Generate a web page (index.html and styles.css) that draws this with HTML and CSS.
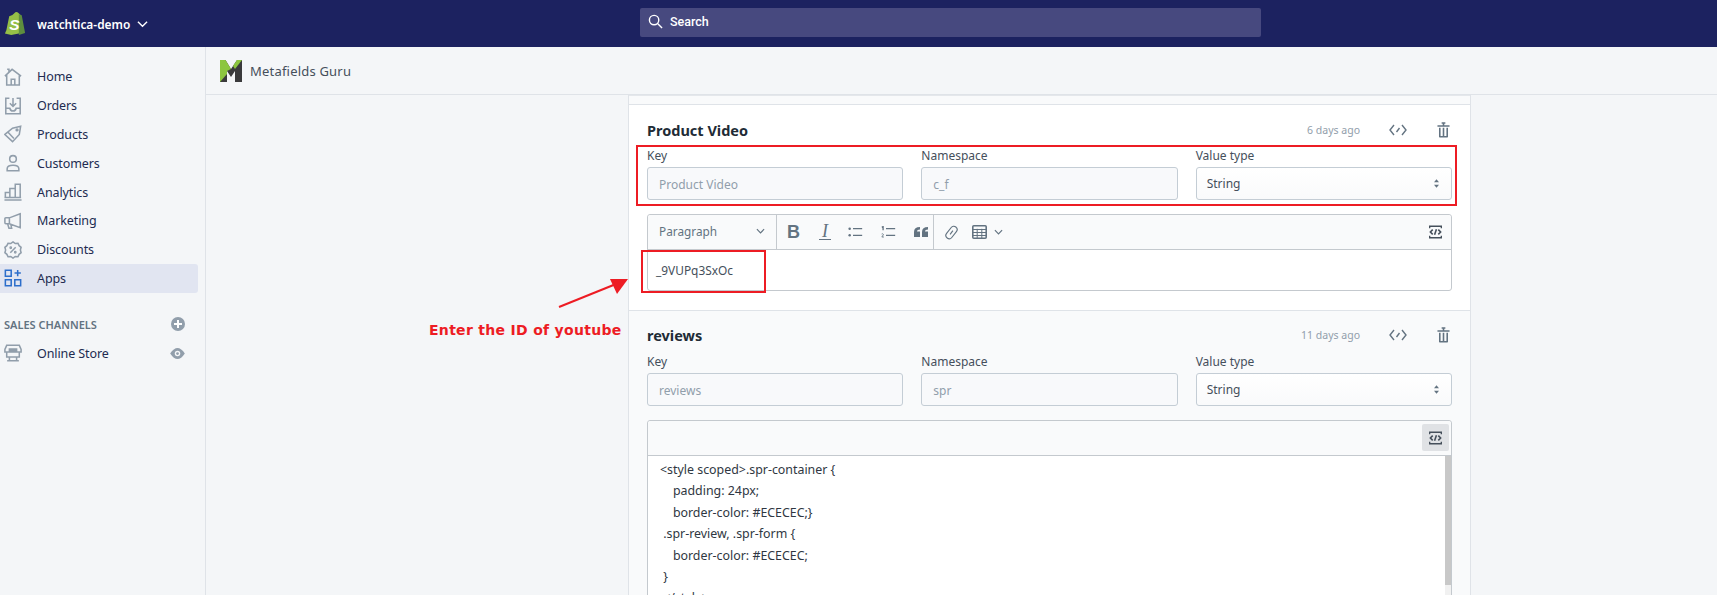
FILE: index.html
```html
<!doctype html>
<html lang="en">
<head>
	<meta charset="utf-8">
	<title>Metafields Guru</title>
	<link rel="stylesheet" href="styles.css">
</head>
<body>

<header class="topbar">
	<div class="store">
		<svg class="shop-logo" viewBox="0 0 22 26">
			<path d="M2 20 5 5.500Q9 4 10 2.500 12 0.500 14 1.500L16.500 4 19 22.500 7 25 0.500 23.500Z" fill="#95bf47"/>
			<path d="M15 3.200 16.500 4 18 4.500 21.500 23 15 25Z" fill="#5e8e3e"/>
			<text x="5" y="19.500" class="shop-s">S</text>
		</svg>
		<span class="store-name">watchtica-demo</span>
		<svg class="store-caret" viewBox="0 0 12 8"><path d="M1 1.500 6 6.500 11 1.500" fill="none" stroke="#fff" stroke-width="1.500"/></svg>
	</div>
	<div class="search">
		<svg viewBox="0 0 16 16" class="search-icon"><circle cx="6.500" cy="6.500" r="5" fill="none" stroke="#fff" stroke-width="1.500"/><path d="M10.500 10.500 15 15" stroke="#fff" stroke-width="1.500"/></svg>
		<span>Search</span>
	</div>
</header>

<div class="layout">
	<aside class="sidebar">
		<nav>
			<a class="nav-item">
				<svg viewBox="0 0 20 20" class="ico"><path d="M1 9 9 1.500 19 9M3 7.500V19H17V7.500M3.500 1.500H5.500V5M8 19V12.500H12V19" /></svg>
				Home
			</a>
			<a class="nav-item">
				<svg viewBox="0 0 20 20" class="ico"><path d="M6 1.500H2V18.500H18V1.500H14M10 1V10M6.500 7 10 10.500 13.500 7M2 12.500H6.500Q7 15.500 10 15.500 13 15.500 13.500 12.500H18"/></svg>
				Orders
			</a>
			<a class="nav-item">
				<svg viewBox="0 0 20 20" class="ico"><path d="M1 10.500 9.500 3.500 18.500 1.500 17 10.500 9.500 18.500ZM4.500 8 11 15"/><circle cx="14.500" cy="5.500" r="1"/></svg>
				Products
			</a>
			<a class="nav-item">
				<svg viewBox="0 0 20 20" class="ico"><circle cx="10" cy="5.500" r="3.700"/><path d="M3.500 18.500V16.500Q3.500 12.500 10 12.500 16.500 12.500 16.500 16.500V18.500Z"/></svg>
				Customers
			</a>
			<a class="nav-item">
				<svg viewBox="0 0 20 20" class="ico"><path d="M1.500 16V10.500H6.500V16M6.500 16V6H12.500V16M12.500 16V1.500H18V16M0.500 16H19M0.500 19H19.500"/></svg>
				Analytics
			</a>
			<a class="nav-item">
				<svg viewBox="0 0 20 20" class="ico"><path d="M18 2 6 6.500H2Q1 6.500 1 7.500V12Q1 13 2 13H6L18 17.500ZM6 6.500V13M4 13 5.500 18H8.500L7.500 13.500"/></svg>
				Marketing
			</a>
			<a class="nav-item">
				<svg viewBox="0 0 20 20" class="ico"><path d="M10 1 12.500 2.800 15.500 2.500 16.800 5.200 19 7 18.200 10 19 13 16.800 14.800 15.500 17.500 12.500 17.200 10 19 7.500 17.200 4.500 17.500 3.200 14.800 1 13 1.800 10 1 7 3.200 5.200 4.500 2.500 7.500 2.800ZM7 13 13 7"/><circle cx="7.500" cy="7.500" r="0.700"/><circle cx="12.500" cy="12.500" r="0.700"/></svg>
				Discounts
			</a>
			<a class="nav-item active">
				<svg viewBox="0 0 20 20" class="ico"><path d="M1.500 1.500H8V8H1.500ZM1.500 12H8V18.500H1.500ZM12 12H18.500V18.500H12ZM15.200 1V8M11.700 4.500H18.700"/></svg>
				Apps
			</a>
		</nav>
		<div class="channels-head">
			<span>SALES CHANNELS</span>
			<svg viewBox="0 0 14 14" class="side-btn"><circle cx="7" cy="7" r="7" fill="#919eab"/><path d="M7 3V11M3 7H11" stroke="#fff" stroke-width="2"/></svg>
		</div>
		<a class="nav-item channel">
			<svg viewBox="0 0 20 20" class="ico"><path d="M3 1.500H17L19 6V9H1V6ZM3 9V14.500H17V9M6 14.500V18.500H14V14.500M3.500 18.500H16.500"/><path d="M6 9V5.500H14V9" class="ico-fill"/></svg>
			Online Store
			<svg viewBox="0 0 16 12" class="side-btn eye"><path d="M0 6Q4 0 8 0 12 0 16 6 12 12 8 12 4 12 0 6Z" fill="#919eab"/><circle cx="8" cy="6" r="3" fill="#f4f6f8"/><circle cx="8" cy="6" r="1.500" fill="#919eab"/></svg>
		</a>
	</aside>

	<main class="main">
		<div class="app-head">
			<svg class="app-logo" viewBox="0 0 22 22">
				<path d="M0 0H5.500L11 9 17 0H22V22H15V11L11 17 7 11V22H0Z" fill="#3a3a3c"/>
				<path d="M0 0H5.500L11 9 7 11 7 14 0 22Z" fill="#8cc63f"/>
				<path d="M17 0H22L15 9 13 6Z" fill="#8cc63f"/>
			</svg>
			<span>Metafields Guru</span>
		</div>

		<div class="card">
			<section class="mf">
				<div class="mf-head">
					<h2>Product Video</h2>
					<span class="ago">6 days ago</span>
					<svg viewBox="0 0 18 12" class="act code-ico"><path d="M5 1 1 6 5 11M13 1 17 6 13 11M7.500 8 10.500 4"/></svg>
					<svg viewBox="0 0 14 17" class="act trash-ico"><path d="M0.500 4.200H13.500M5 1H9M7 1V4M2.500 15.800H11.500M3 6V16M7 6V16M11 6V16" /></svg>
				</div>
				<div class="fields">
					<div class="field"><label>Key</label><div class="input">Product Video</div></div>
					<div class="field"><label>Namespace</label><div class="input">c_f</div></div>
					<div class="field"><label>Value type</label><div class="input select">String
						<svg viewBox="0 0 6 10" class="stepper"><path d="M3 0 6 3.500H0ZM3 10 0 6.500H6Z"/></svg></div></div>
				</div>
				<div class="editor">
					<div class="toolbar">
						<div class="tool-group para"><span>Paragraph</span>
							<svg viewBox="0 0 10 6" class="chev"><path d="M1 1 5 5 9 1"/></svg>
						</div>
						<div class="tool-group tools">
							<span class="t-b">B</span>
							<span class="t-i">I</span>
							<svg viewBox="0 0 18 12" class="t-ico"><circle cx="2" cy="2" r="1.500" class="dot"/><circle cx="2" cy="10" r="1.500" class="dot"/><path d="M6 2H17M6 10H17"/></svg>
							<svg viewBox="0 0 18 14" class="t-ico"><path d="M6 3H17M6 11H17M1 1.500 2.500 0.500V5"/><path d="M0.800 9.500Q2.500 8.500 3 10L1 13H3.500" class="thin"/></svg>
							<svg viewBox="0 0 14 10" class="t-quote"><path d="M0 10V5Q0 0 6 0V2.500Q3 2.500 3 4.500H6V10ZM8 10V5Q8 0 14 0V2.500Q11 2.500 11 4.500H14V10Z"/></svg>
						</div>
						<div class="tool-group tools last">
							<svg viewBox="0 0 16 16" class="t-link"><rect x="4.500" y="0.500" width="7" height="15" rx="3.500" transform="rotate(38 8 8)"/><path d="M6.500 10 9.500 6"/></svg>
							<svg viewBox="0 0 15 14" class="t-table"><rect x="0.800" y="0.800" width="13.400" height="12.400" rx="1" class="t-frame"/><path d="M0.800 4.500H14.200M0.800 7.500H14.200M0.800 10.500H14.200M5.200 3.800V13M9.800 3.800V13" class="thin"/></svg>
							<svg viewBox="0 0 10 6" class="chev"><path d="M1 1 5 5 9 1"/></svg>
						</div>
						<div class="tool-src">
							<svg viewBox="0 0 14 14" class="src-ico"><path d="M0.700 3V0.800H13.300V3M0.700 11V13.200H13.300V11" /><path d="M4 4.500 1.500 7 4 9.500M10 4.500 12.500 7 10 9.500M8 4 6 10" class="mid"/></svg>
						</div>
					</div>
					<div class="editor-body single">_9VUPq3SxOc</div>
				</div>
			</section>

			<section class="mf grey">
				<div class="mf-head">
					<h2>reviews</h2>
					<span class="ago">11 days ago</span>
					<svg viewBox="0 0 18 12" class="act code-ico"><path d="M5 1 1 6 5 11M13 1 17 6 13 11M7.500 8 10.500 4"/></svg>
					<svg viewBox="0 0 14 17" class="act trash-ico"><path d="M0.500 4.200H13.500M5 1H9M7 1V4M2.500 15.800H11.500M3 6V16M7 6V16M11 6V16" /></svg>
				</div>
				<div class="fields">
					<div class="field"><label>Key</label><div class="input">reviews</div></div>
					<div class="field"><label>Namespace</label><div class="input">spr</div></div>
					<div class="field"><label>Value type</label><div class="input select">String
						<svg viewBox="0 0 6 10" class="stepper"><path d="M3 0 6 3.500H0ZM3 10 0 6.500H6Z"/></svg></div></div>
				</div>
				<div class="editor">
					<div class="toolbar">
						<div class="tool-src on">
							<svg viewBox="0 0 14 14" class="src-ico"><path d="M0.700 3V0.800H13.300V3M0.700 11V13.200H13.300V11" /><path d="M4 4.500 1.500 7 4 9.500M10 4.500 12.500 7 10 9.500M8 4 6 10" class="mid"/></svg>
						</div>
					</div>
					<div class="editor-body code">
<pre>&lt;style scoped&gt;.spr-container {
    padding: 24px;
    border-color: #ECECEC;}
 .spr-review, .spr-form {
    border-color: #ECECEC;
 }
 &lt;/style&gt;</pre>
						<div class="scrollbar"><div class="thumb"></div></div>
					</div>
				</div>
			</section>
		</div>
	</main>
</div>

<!-- red marks drawn over the screenshot -->
<div class="mark mark-fields"></div>
<div class="mark mark-id"></div>
<svg class="arrow" viewBox="0 0 72 32"><path d="M1 31 58 8" stroke="#ed1c24" stroke-width="2" fill="none"/><path d="M70 3 52 3 59 18Z" fill="#ed1c24"/></svg>
<div class="note">Enter the ID of youtube</div>

</body>
</html>
```

FILE: styles.css
```css
html, body {
	height: 595px;
	overflow: hidden;
}
body {
	margin: 0;
	position: relative;
	background: #f4f6f8;
	color: #212b36;
	font: 12.500px "Noto Sans", sans-serif;
}

/* top bar */
.topbar {
	height: 47px;
	background: #1c2260;
	display: flex;
	align-items: center;
	color: #fff;
}
.store {
	width: 640px;
	display: flex;
	align-items: center;
	padding-left: 4px;
	box-sizing: border-box;
}
.shop-logo {
	width: 22px;
	height: 25px;
	margin-right: 11px;
}
.shop-s {
	font: italic bold 16px "Liberation Sans", sans-serif;
	fill: #fff;
}
.store-name {
	font-weight: 600;
	font-size: 11.900px;
}
.store-caret {
	width: 11px;
	height: 8px;
	margin-left: 7px;
}
.search {
	width: 621px;
	height: 29px;
	margin-bottom: 3px;
	background: #47497f;
	border-radius: 2px;
	display: flex;
	align-items: center;
	padding: 0 0 1px 8px;
	box-sizing: border-box;
	font: 500 12.500px Roboto, sans-serif;
}
.search-icon {
	width: 15px;
	height: 15px;
	margin-right: 7px;
}

/* sidebar */
.layout {
	display: flex;
	height: 548px;
	overflow: hidden;
}
.sidebar {
	width: 205px;
	flex: none;
	border-right: 1px solid #dfe3e8;
	padding-top: 15.500px;
}
.nav-item {
	height: 28.800px;
	display: flex;
	align-items: center;
	width: 198px;
	padding-left: 4px;
	box-sizing: border-box;
	border-radius: 0 3px 3px 0;
	color: #212b50;
	letter-spacing: -0.100px;
}
.nav-item.active {
	background: #e1e5f1;
}
.ico {
	width: 18px;
	height: 18px;
	margin-right: 15px;
	fill: none;
	stroke: #919eab;
	stroke-width: 1.700;
}
.ico-fill {
	fill: #919eab;
}
.active .ico {
	stroke: #2c6ecb;
}
.channels-head {
	display: flex;
	align-items: center;
	justify-content: space-between;
	width: 185px;
	margin-top: 17px;
	padding-left: 4px;
	height: 29px;
	box-sizing: border-box;
	font-size: 11px;
	font-weight: 600;
	color: #637381;
}
.side-btn {
	width: 14px;
	height: 14px;
}
.channel {
	justify-content: flex-start;
	width: 185px;
}
.eye {
	margin-left: auto;
	width: 15px;
	height: 11px;
}

/* app header */
.main {
	flex: 1;
	min-width: 0;
}
.app-head {
	height: 47px;
	border-bottom: 1px solid #dfe3e8;
	display: flex;
	align-items: center;
	padding-left: 14px;
	font-size: 13px;
	color: #454f5b;
	letter-spacing: 0.200px;
}
.app-logo {
	width: 22px;
	height: 22px;
	margin-right: 8px;
}

/* metafield card */
.card {
	width: 843px;
	margin-left: 422px;
	box-sizing: border-box;
	border-left: 1px solid #dfe3e8;
	border-right: 1px solid #dfe3e8;
	padding-top: 9px;
	background: #f9fafb;
	box-shadow: inset 0 1px 0 #e4e7eb;
}
.mf {
	background: #fff;
	border-top: 1px solid #dfe3e8;
	padding: 15px 18px 19px;
}
.mf.grey {
	background: #f9fafb;
	padding-top: 14px;
	padding-bottom: 0;
}
.mf-head {
	height: 20px;
	display: flex;
	align-items: center;
	margin-bottom: 6px;
}
.grey .mf-head {
	margin-bottom: 7px;
}
h2 {
	margin: 0;
	font-size: 14.500px;
	font-weight: 700;
	flex: 1;
}
.ago {
	font-size: 10.500px;
	color: #919eab;
}
.act {
	fill: none;
	stroke: #637381;
	stroke-width: 1.400;
}
.code-ico {
	width: 18px;
	height: 12px;
	margin-left: 29px;
}
.trash-ico {
	width: 13px;
	height: 16px;
	margin-left: 30px;
	margin-right: 2px;
	stroke-width: 1.700;
}
.fields {
	display: grid;
	grid-template-columns: repeat(3, 1fr);
	gap: 18px;
}
label {
	display: block;
	height: 18px;
	line-height: 20px;
	margin-bottom: 3px;
	font-size: 12px;
	color: #454f5b;
}
.input {
	height: 33px;
	box-sizing: border-box;
	border: 1px solid #c4cdd5;
	border-radius: 3px;
	background: #f8f9fb;
	padding-left: 11px;
	line-height: 33px;
	font-size: 12px;
	color: #919eab;
}
.select {
	position: relative;
	display: flex;
	align-items: center;
	justify-content: space-between;
	padding: 0 12px 0 10px;
	color: #454f5b;
	background: linear-gradient(#fff, #f9fafb);
}
.stepper {
	width: 5px;
	height: 9px;
	fill: #637381;
}

/* editor */
.editor {
	margin-top: 14px;
	border: 1px solid #c4c9ce;
	border-radius: 3px;
	background: #fff;
}
.toolbar {
	height: 34px;
	display: flex;
	background: #f9fafb;
	border-bottom: 1px solid #c4c9ce;
	border-radius: 3px 3px 0 0;
	justify-content: flex-end;
}
.tool-group {
	display: flex;
	align-items: center;
	border-right: 1px solid #c4c9ce;
	box-sizing: border-box;
	color: #637381;
}
.para {
	width: 129px;
	padding: 0 11px 2px 11px;
	justify-content: space-between;
	font-size: 11.800px;
}
.tools {
	width: 157px;
	padding-left: 10px;
	gap: 18px;
}
.tools.last {
	border-right: 0;
	width: auto;
	gap: 8px;
	margin-right: auto;
}
.chev {
	width: 9px;
	height: 6px;
	fill: none;
	stroke: #637381;
	stroke-width: 1.300;
}
.t-b {
	font: bold 18px "Liberation Sans", sans-serif;
	color: #637381;
	width: 12px;
}
.t-i {
	font: italic 18px "Liberation Serif", serif;
	color: #637381;
	width: 12px;
	margin-left: 2px;
	margin-right: -1px;
	border-bottom: 1px solid #637381;
	line-height: 15px;
	text-align: center;
}
.t-ico {
	width: 15px;
	height: 12px;
	fill: none;
	stroke: #637381;
	stroke-width: 1.600;
}
.t-ico .dot {
	fill: #637381;
	stroke: none;
}
.thin {
	stroke-width: 1;
}
.mid {
	stroke-width: 1.700;
}
.t-quote {
	width: 14px;
	height: 10px;
	fill: #637381;
}
.t-link {
	width: 15px;
	height: 15px;
	fill: none;
	stroke: #637381;
	stroke-width: 1.200;
}
.t-table {
	width: 15px;
	height: 14px;
	fill: none;
	stroke: #637381;
	margin-left: 5px;
	margin-right: -1px;
}
.t-frame {
	stroke-width: 1.600;
}
.tool-src {
	width: 27px;
	height: 27px;
	margin: 3px 2px 0 0;
	display: flex;
	align-items: center;
	justify-content: center;
	border-radius: 2px;
}
.tool-src.on {
	background: #e0e2e5;
}
.src-ico {
	width: 13px;
	height: 14px;
	fill: none;
	stroke: #454f5b;
	stroke-width: 1.500;
}
.editor-body.single {
	height: 40px;
	line-height: 40px;
	padding-left: 8px;
	font-size: 11.900px;
	color: #454f5b;
	box-sizing: border-box;
}
.editor-body.code {
	display: flex;
	justify-content: space-between;
	height: 142px;
	overflow: hidden;
}
pre {
	margin: 3px 0 0 12px;
	font: 12.400px/21.400px "Noto Sans", sans-serif;
	color: #2f3742;
}
.scrollbar {
	width: 6px;
	background: #f1f1f1;
}
.thumb {
	height: 129px;
	background: #c8c8c8;
}

/* annotations */
.mark {
	position: absolute;
	box-sizing: border-box;
	border: 2px solid #ed1c24;
}
.mark-fields {
	left: 636px;
	top: 145px;
	width: 821px;
	height: 61px;
}
.mark-id {
	left: 641px;
	top: 250px;
	width: 125px;
	height: 43px;
}
.arrow {
	position: absolute;
	left: 558px;
	top: 276px;
	width: 72px;
	height: 32px;
}
.note {
	position: absolute;
	left: 429px;
	top: 321px;
	font: bold 14px/18px "DejaVu Sans", sans-serif;
	letter-spacing: 0.300px;
	color: #ed1c24;
}
```
